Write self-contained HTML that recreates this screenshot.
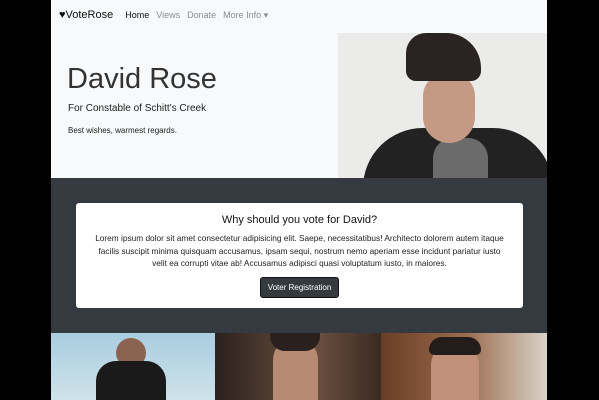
<!DOCTYPE html>
<html><head><style>
*{margin:0;padding:0;box-sizing:border-box}
body{width:599px;height:400px;background:#000;font-family:"Liberation Sans",sans-serif;overflow:hidden;position:relative}
#w{position:absolute;left:51px;top:0;width:496px;height:400px;background:#f8f9fa;overflow:hidden}
nav{height:30px;display:flex;align-items:center;font-size:9px;padding-left:8px}
.brand{font-size:11px;color:#111;margin-right:12px}
nav a{margin-right:7px;color:#8a8d91}
nav a.on{color:#111}
.hero{position:absolute;top:33px;left:0;width:496px;height:145px}
h1{position:absolute;left:16px;top:30px;font-weight:300;font-size:29px;color:#333}
.sub{position:absolute;left:17px;top:70px;font-size:10px;color:#222}
.bw{position:absolute;left:17px;top:93px;font-size:8px;color:#222}
.ph{position:absolute;left:287px;top:0;width:209px;height:145px;background:#ebebea;overflow:hidden}
.dark{position:absolute;top:178px;left:0;width:496px;height:155px;background:#343a40}
.card{position:absolute;left:25px;top:25px;width:447px;height:105px;background:#fff;border-radius:3px;text-align:center}
.card h2{font-size:11px;font-weight:normal;color:#111;margin-top:11px}
.card p{font-size:8.3px;line-height:12.5px;color:#222;margin:6px 0 0;white-space:nowrap}
.btn{display:inline-block;margin-top:7px;background:#343a40;color:#fff;font-size:8px;padding:5px 7px;border-radius:3px;border:1px solid #111}
.im{position:absolute;top:333px;height:67px}
</style></head><body><div id="w">
<nav><span class="brand">&#9829;VoteRose</span><a class="on">Home</a><a>Views</a><a>Donate</a><a>More Info ▾</a></nav>
<div class="hero"><h1>David Rose</h1><div class="sub">For Constable of Schitt's Creek</div><div class="bw">Best wishes, warmest regards.</div>
<div class="ph">
<div style="position:absolute;left:25px;top:95px;width:190px;height:80px;background:#222;border-radius:60px 60px 0 0"></div>
<div style="position:absolute;left:95px;top:105px;width:55px;height:40px;background:#6b6b6b;border-radius:20px 20px 0 0"></div>
<div style="position:absolute;left:85px;top:40px;width:52px;height:70px;background:#c49a84;border-radius:25px 25px 28px 28px"></div>
<div style="position:absolute;left:68px;top:0px;width:75px;height:48px;background:#2a2322;border-radius:20px 35px 10px 10px"></div>
</div></div>
<div class="dark"><div class="card"><h2>Why should you vote for David?</h2>
<p>Lorem ipsum dolor sit amet consectetur adipisicing elit. Saepe, necessitatibus! Architecto dolorem autem itaque<br>facilis suscipit minima quisquam accusamus, ipsam sequi, nostrum nemo aperiam esse incidunt pariatur iusto<br>velit ea corrupti vitae ab! Accusamus adipisci quasi voluptatum iusto, in maiores.</p>
<span class="btn">Voter Registration</span></div></div>
<div class="im" style="left:0;width:164px;background:linear-gradient(#a9cde0,#cfe3ea)"><div style="position:absolute;left:65px;top:5px;width:30px;height:30px;background:#8a6450;border-radius:50%"></div><div style="position:absolute;left:45px;top:28px;width:70px;height:40px;background:#1a1a1a;border-radius:20px 20px 0 0"></div></div>
<div class="im" style="left:164px;width:166px;background:linear-gradient(90deg,#2b211d,#6b5140 60%,#3a2a22)"><div style="position:absolute;left:58px;top:5px;width:45px;height:62px;background:#b98a72;border-radius:22px 22px 0 0"></div><div style="position:absolute;left:55px;top:0;width:50px;height:18px;background:#2a211e;border-radius:0 0 15px 15px"></div></div>
<div class="im" style="left:330px;width:166px;background:linear-gradient(90deg,#6a3d25,#9a6a4a 50%,#d9d2c8)"><div style="position:absolute;left:50px;top:8px;width:48px;height:60px;background:#c09078;border-radius:24px 24px 0 0"></div><div style="position:absolute;left:48px;top:4px;width:52px;height:18px;background:#241c1a;border-radius:15px 15px 6px 6px"></div></div>
</div></body></html>
